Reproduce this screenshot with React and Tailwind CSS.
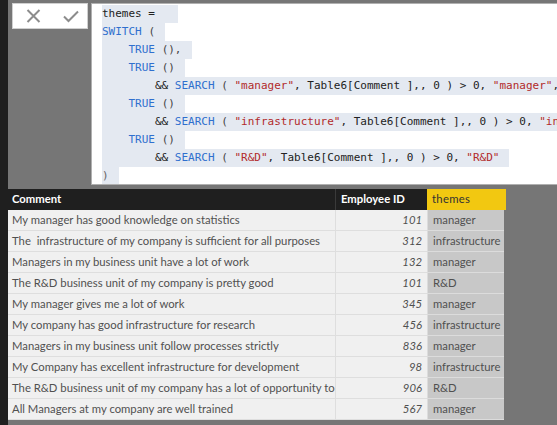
import React from "react";

const K = ({ children }) => <span className="text-[#2f6fce]">{children}</span>;
const S = ({ children }) => <span className="text-[#b22a2a]">{children}</span>;
const P = ({ children }) => <span className="text-[#444444]">{children}</span>;

const Line = ({ indent = 0, children }) => (
  <div className="h-[18px] whitespace-pre">
    <span className="inline-block h-[18px] bg-[#e4e9f1] pr-[10px]">
      {" ".repeat(indent)}
      {children}
    </span>
  </div>
);

const rows = [
  ["My manager has good knowledge on statistics", 101, "manager"],
  ["The  infrastructure of my company is sufficient for all purposes", 312, "infrastructure"],
  ["Managers in my business unit have a lot of work", 132, "manager"],
  ["The R&D business unit of my company is pretty good", 101, "R&D"],
  ["My manager gives me a lot of work", 345, "manager"],
  ["My company has good infrastructure for research", 456, "infrastructure"],
  ["Managers in my business unit follow processes strictly", 836, "manager"],
  ["My Company has excellent infrastructure for development", 98, "infrastructure"],
  ["The R&D business unit of my company has a lot of opportunity to grow", 906, "R&D"],
  ["All Managers at my company are well trained", 567, "manager"],
];

export default function App() {
  return (
    <div className="flex w-[557px] h-[425px] overflow-hidden bg-[#767676]">
      <div className="w-[8px] shrink-0 bg-[#1f1f1f]" />
      <div className="flex flex-col flex-1 min-w-0">
        <div className="flex pt-[3px]">
          <div className="ml-[4px] w-[76px] h-[26px] bg-white border border-[#d0d0d0] flex items-center pl-[13px] gap-[22px]">
            <svg width="15" height="14" viewBox="0 0 15 14">
              <path d="M1.5 1 L13.5 13 M13.5 1 L1.5 13" stroke="#8c8c8c" strokeWidth="2" fill="none" />
            </svg>
            <svg width="16" height="13" viewBox="0 0 16 13">
              <path d="M1 6.5 L5.5 11 L15 1.5" stroke="#8c8c8c" strokeWidth="2" fill="none" />
            </svg>
          </div>
          <div
            className="ml-[3px] flex-1 h-[182px] bg-white border border-[#b0b0b0] border-r-0 pl-[10px] pt-[1px] overflow-hidden text-[11px] leading-[18px] text-[#222222]"
            style={{ fontFamily: '"DejaVu Sans Mono", monospace' }}
          >
            <Line>{"themes =  "}</Line>
            <Line><K>SWITCH</K> <P>(</P></Line>
            <Line indent={4}><K>TRUE</K> <P>(),</P></Line>
            <Line indent={4}><K>TRUE</K> <P>()</P></Line>
            <Line indent={8}>
              {"&& "}<K>SEARCH</K> <P>(</P> <S>"manager"</S>, Table6[Comment ],, 0 ) &gt; 0, <S>"manager"</S>,
            </Line>
            <Line indent={4}><K>TRUE</K> <P>()</P></Line>
            <Line indent={8}>
              {"&& "}<K>SEARCH</K> <P>(</P> <S>"infrastructure"</S>, Table6[Comment ],, 0 ) &gt; 0, <S>"infrastructure"</S>,
            </Line>
            <Line indent={4}><K>TRUE</K> <P>()</P></Line>
            <Line indent={8}>
              {"&& "}<K>SEARCH</K> <P>(</P> <S>"R&amp;D"</S>, Table6[Comment ],, 0 ) &gt; 0, <S>"R&amp;D"</S>
            </Line>
            <Line><span className="text-[#666666]">)</span></Line>
          </div>
        </div>

        <div
          className="mt-[4px] w-[498px] text-[11.3px]"
          style={{ fontFamily: 'Lato, "Liberation Sans", sans-serif' }}
        >
          <div className="flex h-[21px] items-center bg-[#1f1f1f] font-bold text-white">
            <div className="w-[328px] pl-[4px] border-r border-[#3a3a3a] h-full flex items-center">Comment</div>
            <div className="w-[91px] pl-[5px] h-full flex items-center">Employee ID</div>
            <div className="w-[79px] h-full bg-[#f2c811] text-[#333333] font-normal pl-[5px] flex items-center tracking-[0.3px]">themes</div>
          </div>
          {rows.map(([c, id, t], i) => (
            <div key={i} className="flex h-[21px] text-[#505050]">
              <div className="w-[328px] h-full bg-[#f0f0f0] border-r border-b border-[#dedede] pl-[4px] flex items-center whitespace-pre overflow-hidden">
                {c}
              </div>
              <div className="w-[91px] h-full bg-[#f0f0f0] border-b border-[#dedede] pr-[5px] flex items-center justify-end italic">
                {id}
              </div>
              <div className="w-[77px] h-full bg-[#c8c8c8] border-b border-l border-[#dcdcdc] pl-[5px] flex items-center">
                {t}
              </div>
            </div>
          ))}
        </div>
      </div>
    </div>
  );
}
